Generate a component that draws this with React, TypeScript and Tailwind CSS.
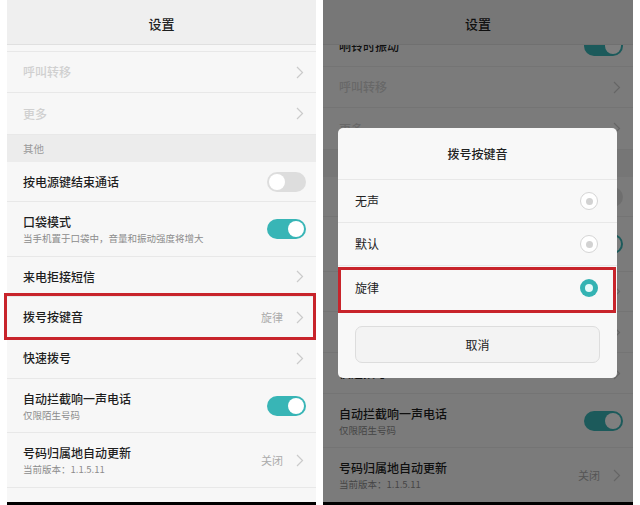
import React from 'react';

type Item = {
  title: string;
  sub?: string;
  value?: string;
  toggle?: 'on' | 'off';
  chevron?: boolean;
  disabled?: boolean;
  section?: boolean;
  h: string;
};

// 同一份设置列表，左右两屏只是滚动位置不同
const items: Item[] = [
  { title: '响铃时振动', toggle: 'on', h: 'h-[41px]' },
  { title: '呼叫转移', chevron: true, disabled: true, h: 'h-[41px]' },
  { title: '更多', chevron: true, disabled: true, h: 'h-[42px]' },
  { title: '其他', section: true, h: 'h-[27px]' },
  { title: '按电源键结束通话', toggle: 'off', h: 'h-[40px]' },
  { title: '口袋模式', sub: '当手机置于口袋中，音量和振动强度将增大', toggle: 'on', h: 'h-[55px]' },
  { title: '来电拒接短信', chevron: true, h: 'h-[40px]' },
  { title: '拨号按键音', value: '旋律', chevron: true, h: 'h-[41px]' },
  { title: '快速拨号', chevron: true, h: 'h-[41px]' },
  { title: '自动拦截响一声电话', sub: '仅限陌生号码', toggle: 'on', h: 'h-[54px]' },
  { title: '号码归属地自动更新', sub: '当前版本：1.1.5.11', value: '关闭', chevron: true, h: 'h-[55px]' },
  { title: '', h: 'h-[41px]' },
];

const Chevron = () => (
  <svg width="8" height="13" viewBox="0 0 8 13" className="shrink-0">
    <path d="M1 1l5.5 5.5L1 12" fill="none" stroke="#cbcbcb" strokeWidth="1.2" />
  </svg>
);

const Toggle = ({ on }: { on: boolean }) => (
  <span
    className={`flex h-[20px] w-[39px] items-center rounded-full p-[2px] ${
      on ? 'justify-end bg-[#38b5b6]' : 'justify-start bg-[#dddddd]'
    }`}
  >
    <span className="h-[16px] w-[16px] rounded-full bg-white" />
  </span>
);

const Row = ({ item }: { item: Item }) => {
  if (item.section) {
    return (
      <div className={`flex items-center bg-[#ececec] pl-[16px] text-[10.5px] text-[#9a9a9a] ${item.h}`}>
        {item.title}
      </div>
    );
  }
  return (
    <div
      className={`flex items-center justify-between border-b border-[#e8e8e8] bg-[#f7f7f7] pl-[16px] ${
        item.toggle ? 'pr-[10px]' : 'pr-[12px]'
      } ${item.h}`}
    >
      <div className="flex flex-col">
        <span className={`text-[12px] leading-[16px] font-medium ${item.disabled ? 'text-[#d0d0d0]' : 'text-[#1e1e1e]'}`}>
          {item.title}
        </span>
        {item.sub && <span className="mt-[2px] text-[9.5px] leading-[12px] text-[#8c8c8c]">{item.sub}</span>}
      </div>
      <div className="flex items-center gap-[13px]">
        {item.value && <span className="text-[11px] text-[#ababab]">{item.value}</span>}
        {item.toggle && <Toggle on={item.toggle === 'on'} />}
        {item.chevron && <Chevron />}
      </div>
    </div>
  );
};

const Screen = ({ offset, width, children }: { offset: string; width: string; children?: React.ReactNode }) => (
  <div className={`relative flex h-[505px] shrink-0 flex-col overflow-hidden bg-[#f7f7f7] ${width}`}>
    <header className="flex h-[45px] shrink-0 items-center justify-center border-b border-[#e0e0e0] bg-[#efefef] pt-[4px] text-[13px] font-medium text-[#1e1e1e]">
      设置
    </header>
    <div className="min-h-0 flex-1 overflow-hidden">
      <div className={offset}>
        {items.map((item, i) => (
          <Row key={i} item={item} />
        ))}
      </div>
    </div>
    <div className="h-[3px] shrink-0 bg-black" />
    {children}
  </div>
);

const Radio = ({ on }: { on: boolean }) =>
  on ? (
    <span className="flex h-[18px] w-[18px] items-center justify-center rounded-full bg-[#34b3b3]">
      <span className="h-[8px] w-[8px] rounded-full bg-[#e6fafa]" />
    </span>
  ) : (
    <span className="flex h-[18px] w-[18px] items-center justify-center rounded-full border border-[#d5d5d5] bg-white">
      <span className="h-[7px] w-[7px] rounded-full bg-[#d2d2d2]" />
    </span>
  );

const options = ['无声', '默认', '旋律'];

const Dialog = () => (
  <div className="absolute left-[15px] top-[128px] flex h-[250px] w-[279px] flex-col rounded-[5px] bg-[#f8f8f8]">
    <div className="flex h-[52px] items-center justify-center border-b border-[#e8e8e8] text-[12px] font-medium text-[#222]">
      拨号按键音
    </div>
    {options.map((opt, i) => (
      <div
        key={opt}
        className={`relative flex h-[43px] items-center justify-between pl-[17px] pr-[19px] text-[12px] text-[#222] ${
          i < options.length - 1 ? 'border-b border-[#e8e8e8]' : ''
        }`}
      >
        <span>{opt}</span>
        <Radio on={i === 2} />
        {i === 2 && (
          <span className="absolute left-0 right-[1px] top-[1px] bottom-[-4px] border-[3px] border-[#c8242b]" />
        )}
      </div>
    ))}
    <button className="mx-[17px] mt-[17px] flex h-[37px] items-center justify-center rounded-[7px] border border-[#dddddd] bg-[#f3f3f3] text-[12px] text-[#222]">
      取消
    </button>
  </div>
);

export default function App() {
  return (
    <div className="flex h-[505px] w-[640px] gap-[7px] overflow-hidden bg-white pl-[7px] font-['Noto_Sans_CJK_SC','Noto_Sans',sans-serif]">
      <div className="relative">
        <Screen offset="-mt-[34px]" width="w-[309px]" />
        {/* 红框标注 */}
        <span className="absolute left-[-3px] top-[293px] h-[47px] w-[312px] border-[3px] border-[#c8242b]" />
      </div>
      <Screen offset="-mt-[19px]" width="w-[310px]">
        <div className="absolute inset-0 bg-black/50" />
        <Dialog />
      </Screen>
    </div>
  );
}
